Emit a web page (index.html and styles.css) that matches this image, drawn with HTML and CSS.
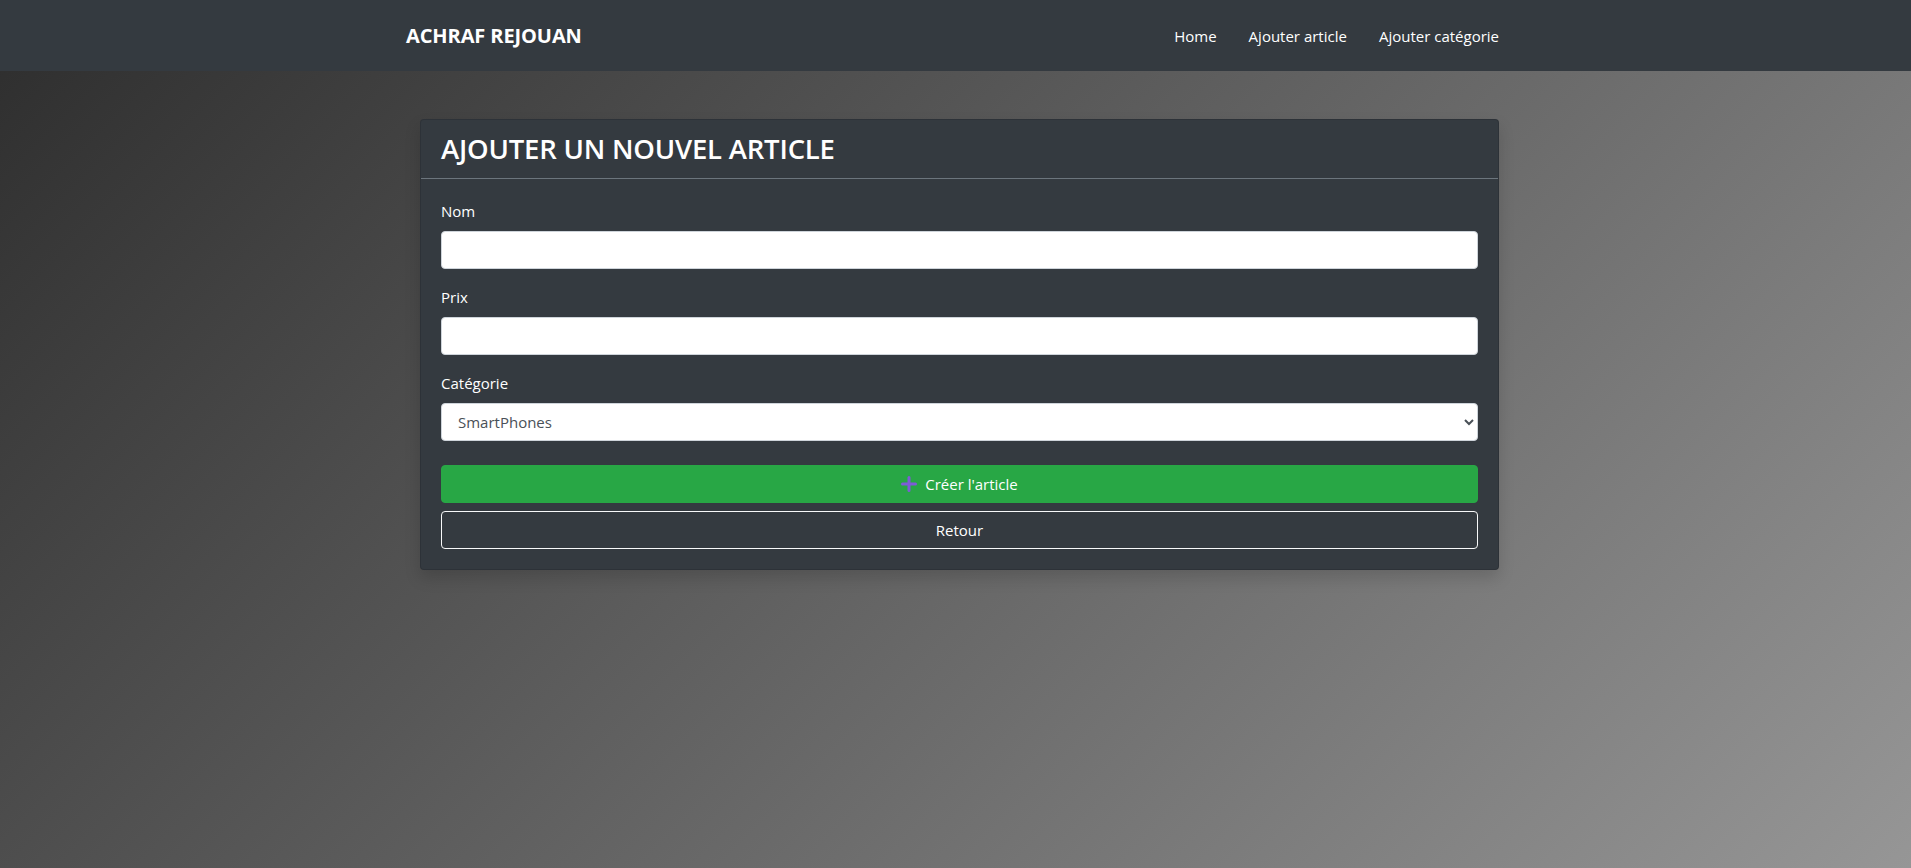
FILE: index.html
```html
<!DOCTYPE html>
<html lang="fr">
<head>
<meta charset="utf-8">
<title>Ajouter un article</title>
<link rel="stylesheet" href="styles.css">
</head>
<body>
<nav class="navbar">
  <div class="nav-inner">
    <a class="brand" href="#">ACHRAF REJOUAN</a>
    <ul class="nav-links">
      <li><a href="#">Home</a></li>
      <li><a href="#">Ajouter article</a></li>
      <li><a href="#">Ajouter catégorie</a></li>
    </ul>
  </div>
</nav>
<main class="page">
  <section class="card">
    <header class="card-header">
      <h3 class="card-title">AJOUTER UN NOUVEL ARTICLE</h3>
    </header>
    <form class="card-body">
      <div class="form-group">
        <label class="label" for="nom">Nom</label>
        <input class="control" id="nom" type="text">
      </div>
      <div class="form-group">
        <label class="label" for="prix">Prix</label>
        <input class="control" id="prix" type="text">
      </div>
      <div class="form-group">
        <label class="label" for="cat">Catégorie</label>
        <select class="control select" id="cat">
          <option>SmartPhones</option>
        </select>
      </div>
      <div class="actions">
        <button type="button" class="btn btn-success">
          <svg class="plus" width="16" height="16" viewBox="0 0 16 16" aria-hidden="true"><path d="M8 1.5v13M1.5 8h13" stroke="currentColor" stroke-width="3" stroke-linecap="round"/></svg>
          <span>Créer l'article</span>
        </button>
        <button type="button" class="btn btn-outline">Retour</button>
      </div>
    </form>
  </section>
</main>
</body>
</html>
```

FILE: styles.css
```css
* { box-sizing: border-box; }

html, body { margin: 0; padding: 0; }

body {
  min-height: 100vh;
  font-family: "Open Sans", "Noto Sans", "Liberation Sans", sans-serif;
  font-size: 15px;
  color: #fff;
  background: linear-gradient(135deg, #2d2d2d 0%, #969696 100%);
}

.navbar {
  height: 71px;
  background: #343a40;
  display: flex;
  align-items: center;
  padding-right: 6px;
}

.nav-inner {
  width: 1093px;
  margin: 0 auto;
  display: flex;
  align-items: center;
  justify-content: space-between;
}

.brand {
  color: #fff;
  text-decoration: none;
  font-weight: 700;
  font-size: 20px;
  letter-spacing: -0.1px;
}

.nav-links {
  list-style: none;
  margin: 0;
  padding: 0;
  display: flex;
  gap: 32px;
}

.nav-links a {
  color: #fff;
  text-decoration: none;
  font-size: 15px;
}

.page {
  display: flex;
  justify-content: center;
  padding: 48px 0 0 8px;
}

.card {
  width: 1079px;
  background: #343a40;
  border: 1px solid rgba(0, 0, 0, 0.125);
  border-radius: 4px;
  box-shadow: 0 8px 16px rgba(0, 0, 0, 0.15);
}

.card-header {
  padding: 12px 20px;
  border-bottom: 1px solid #6c757d;
}

.card-title {
  margin: 0;
  font-size: 27.5px;
  font-weight: 600;
  line-height: 34px;
  letter-spacing: -0.2px;
}

.card-body {
  padding: 20px;
  display: flex;
  flex-direction: column;
}

.form-group {
  display: flex;
  flex-direction: column;
  margin-bottom: 16px;
}

.label {
  line-height: 24px;
  margin-bottom: 8px;
}

.control {
  width: 100%;
  height: 38px;
  padding: 6px 12px;
  font: inherit;
  font-size: 15px;
  color: #495057;
  background: #fff;
  border: 1px solid #ced4da;
  border-radius: 4px;
  outline: none;
}

.select {
  padding-left: 12px;
}

.actions {
  display: flex;
  flex-direction: column;
  gap: 8px;
  margin-top: 8px;
}

.btn {
  height: 38px;
  width: 100%;
  display: flex;
  align-items: center;
  justify-content: center;
  gap: 8px;
  font: inherit;
  font-size: 15px;
  color: #fff;
  border-radius: 4px;
  cursor: pointer;
}

.btn-success {
  background: #28a745;
  border: 1px solid #28a745;
}

.plus {
  color: #7e5bd6;
}

.btn-outline {
  background: transparent;
  border: 1px solid #f8f9fa;
}
```
